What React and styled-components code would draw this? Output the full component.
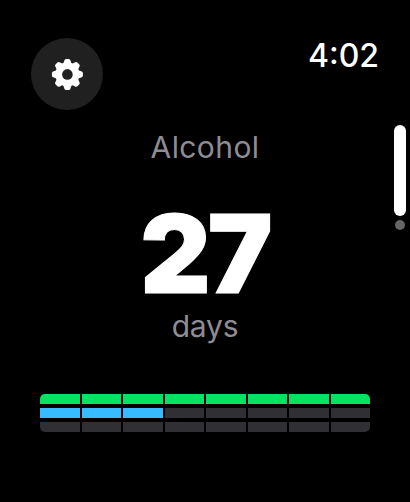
import React from 'react';
import styled, { createGlobalStyle } from 'styled-components';

const GlobalStyle = createGlobalStyle`
  body {
    margin: 0;
    background-color: #000;
  }
`;

const Screen = styled.main`
  position: relative;
  box-sizing: border-box;
  width: 410px;
  height: 502px;
  padding-top: 38px;
  overflow: hidden;
  background-color: #000;
  color: #fff;
  font-family: Inter, 'Liberation Sans', sans-serif;
`;

const Header = styled.header`
  display: flex;
  justify-content: space-between;
  align-items: flex-start;
  height: 90px;
  padding: 0 31px;
`;

const SettingsButton = styled.button`
  display: flex;
  justify-content: center;
  align-items: center;
  width: 72px;
  height: 72px;
  padding: 0;
  border: 0;
  border-radius: 50%;
  background-color: #202020;
  color: #fff;
`;

const Time = styled.time`
  font-size: 32px;
  font-weight: 500;
  line-height: 36px;
`;

const Counter = styled.section`
  display: flex;
  flex-direction: column;
  align-items: center;
`;

const Label = styled.div`
  height: ${({ $height }) => $height}px;
  color: #8e8d93;
  font-size: 30px;
  font-weight: 400;
  line-height: 38px;
  letter-spacing: ${({ $spacing }) => $spacing}px;
`;

const Count = styled.div`
  height: 104px;
  margin-bottom: 2px;
  font-size: 109px;
  font-weight: 900;
  line-height: 104px;
  letter-spacing: -3px;
  -webkit-text-stroke: 1px #fff;
`;

const Progress = styled.div`
  display: flex;
  flex-direction: column;
  gap: 4px;
  margin: 0 40px;
  overflow: hidden;
  border-radius: 5px;
`;

const Row = styled.div`
  display: grid;
  grid-template-columns: repeat(8, 1fr);
  gap: 2px;
  height: 10px;
`;

const Segment = styled.div`
  background-color: ${({ $color }) => $color};
`;

const ScrollIndicator = styled.div`
  position: absolute;
  top: 125px;
  right: 4px;
  display: flex;
  flex-direction: column;
  align-items: center;
  gap: 4px;
`;

const Thumb = styled.div`
  width: 12px;
  height: 91px;
  border-radius: 6px;
  background-color: #fff;
`;

const Dot = styled.div`
  width: 10px;
  height: 10px;
  border-radius: 50%;
  background-color: #656565;
`;

const teeth = [0, 45, 90, 135, 180, 225, 270, 315];

const rows = [
  { filled: 8, color: '#00e461' },
  { filled: 3, color: '#37bdff' },
  { filled: 0, color: '#303034' },
];

const Gear = () => (
  <svg width="32" height="32" viewBox="-16.4 -16.4 32 32" fill="currentColor">
    {teeth.map((angle) => (
      <path
        key={angle}
        d="M-5 -10.6 Q-3.7 -11.3 -3.4 -13 Q-3 -15.5 -1.4 -15.5 H1.4 Q3 -15.5 3.4 -13 Q3.7 -11.3 5 -10.6 L3 -6 H-3Z"
        transform={`rotate(${angle})`}
      />
    ))}
    <circle r="11.5" />
    <circle r="5.3" fill="#202020" />
  </svg>
);

const App = () => {
  return (
    <>
      <GlobalStyle />
      <Screen>
        <Header>
          <SettingsButton aria-label="Settings">
            <Gear />
          </SettingsButton>
          <Time>4:02</Time>
        </Header>
        <Counter>
          <Label $height={73} $spacing={0.4}>Alcohol</Label>
          <Count>27</Count>
          <Label $height={87} $spacing={-0.2}>days</Label>
        </Counter>
        <Progress>
          {rows.map(({ filled, color }, row) => (
            <Row key={row}>
              {Array.from({ length: 8 }, (_, i) => (
                <Segment key={i} $color={i < filled ? color : '#303034'} />
              ))}
            </Row>
          ))}
        </Progress>
        <ScrollIndicator>
          <Thumb />
          <Dot />
        </ScrollIndicator>
      </Screen>
    </>
  );
};

export default App;
